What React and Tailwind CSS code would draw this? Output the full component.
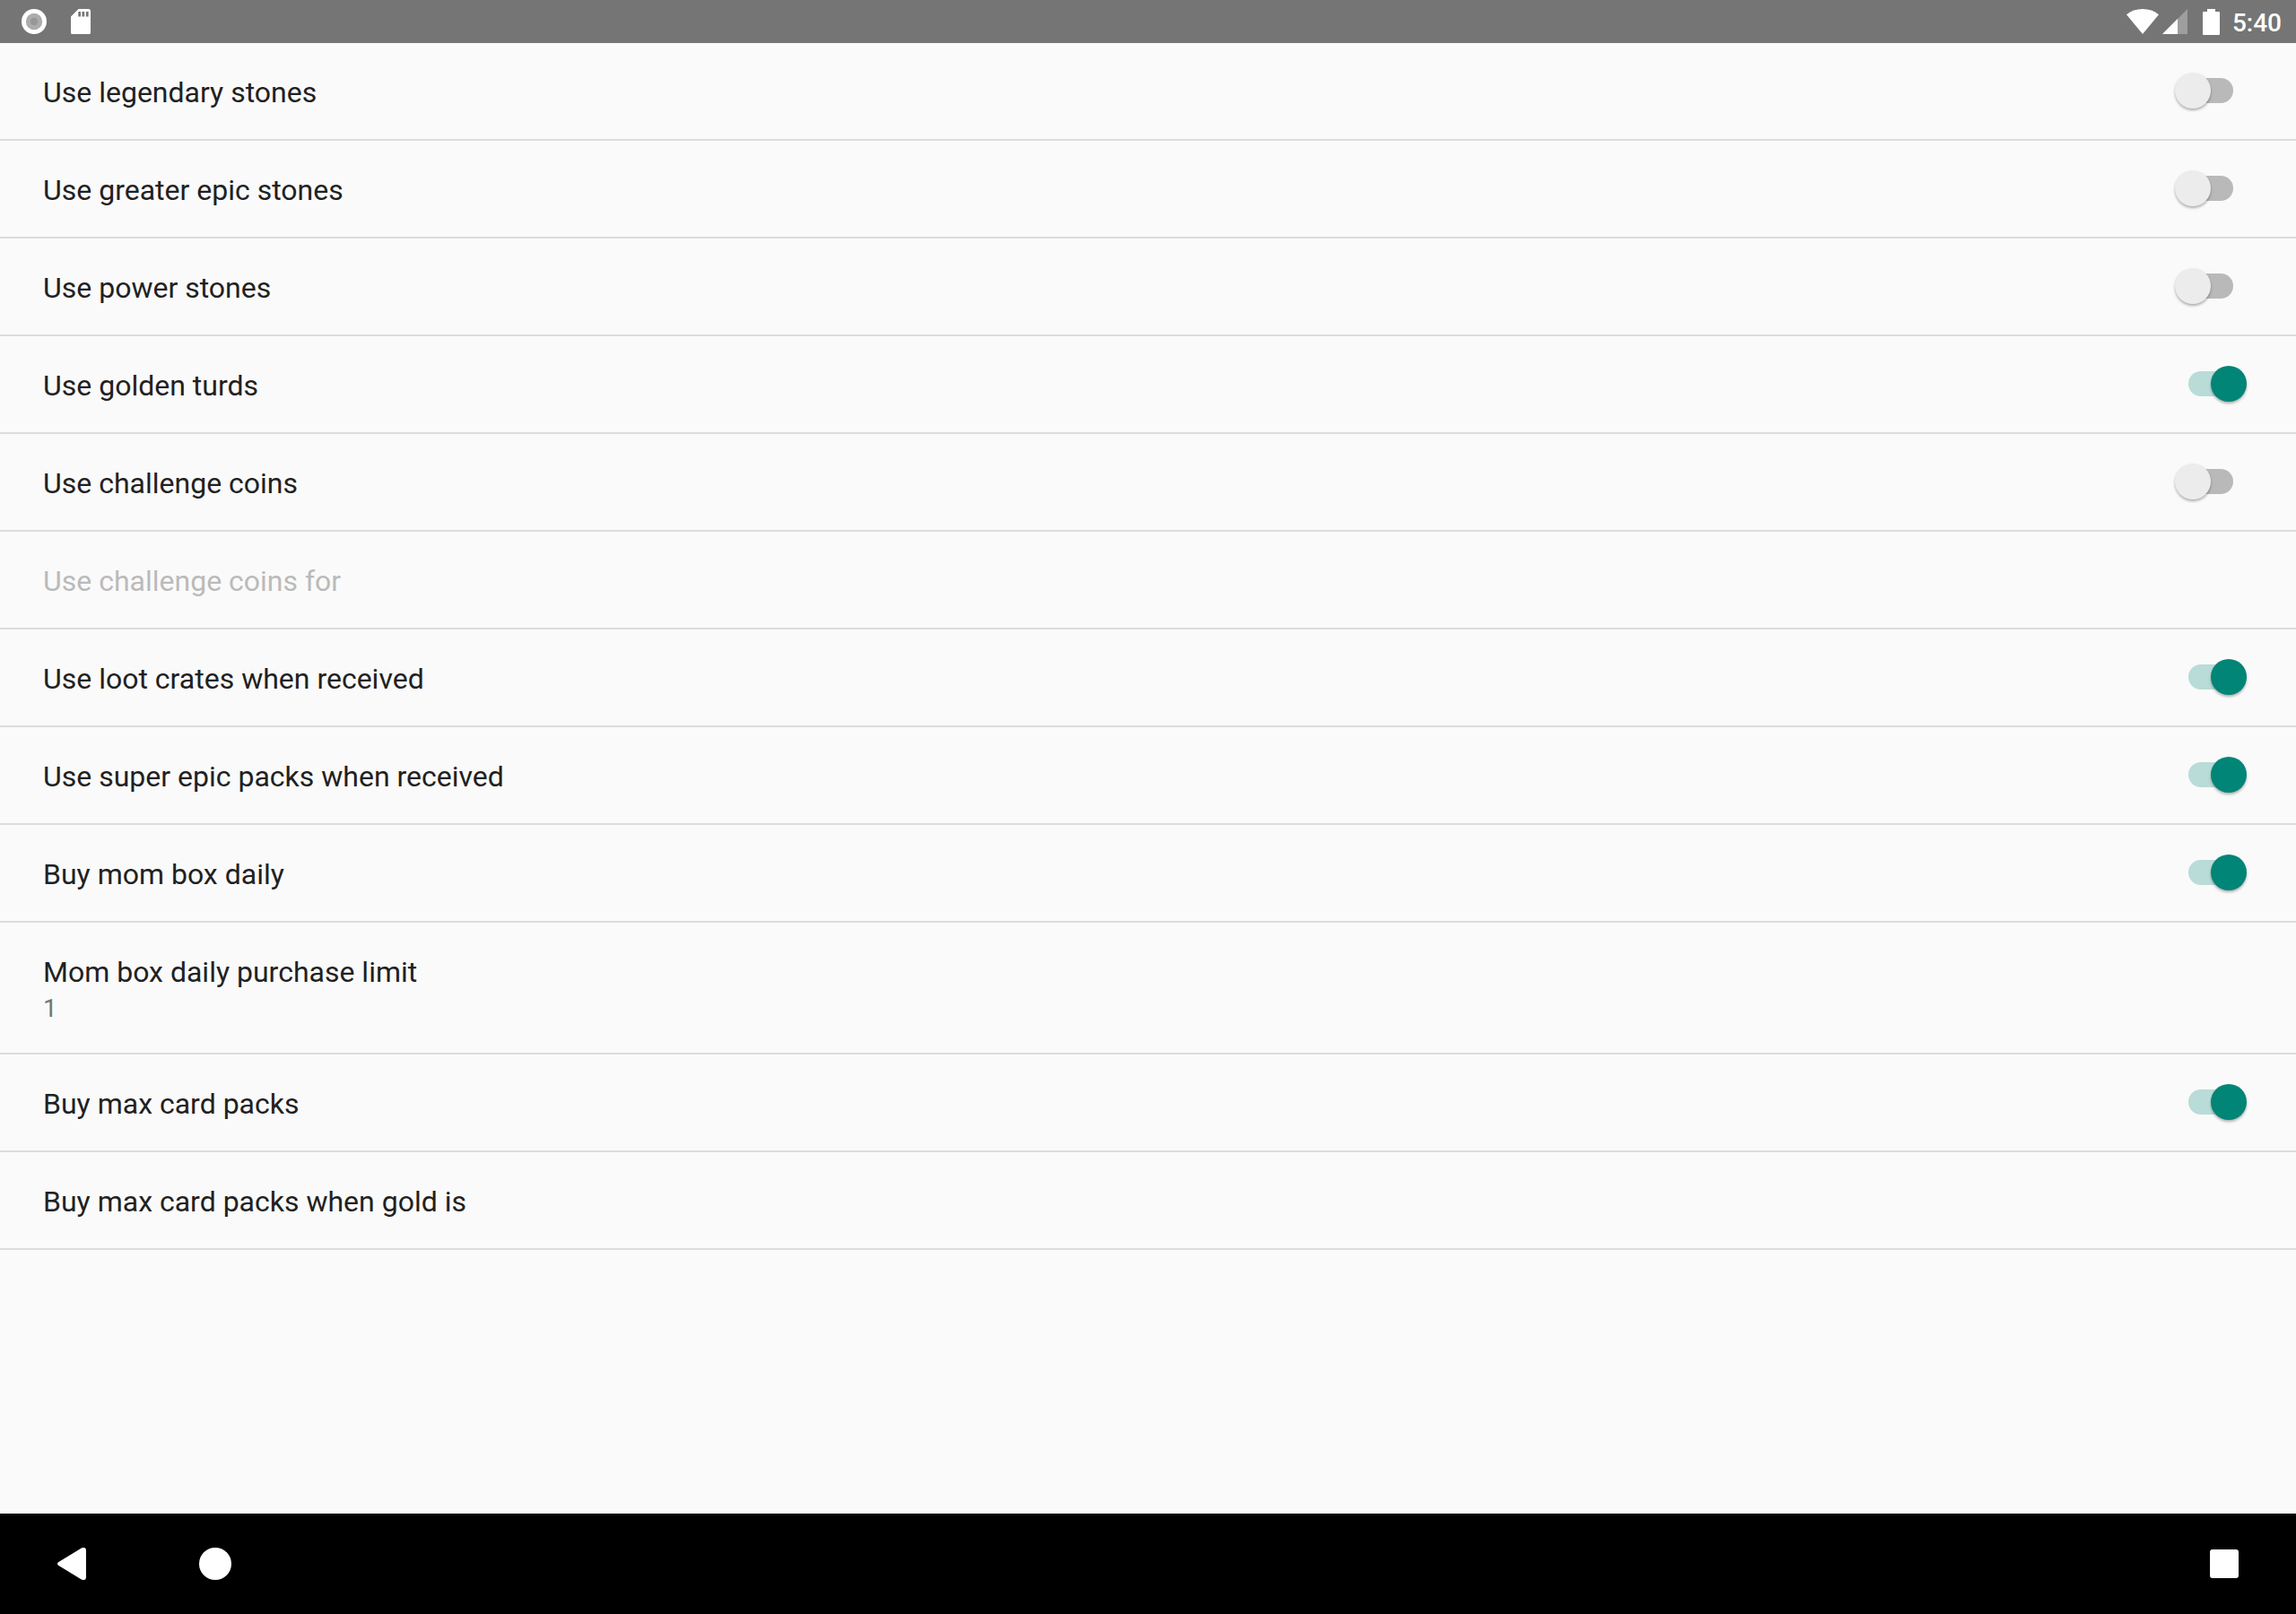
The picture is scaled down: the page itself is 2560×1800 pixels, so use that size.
import { useState } from 'react'

const PREFERENCES = [
  { key: 'legendaryStones', title: 'Use legendary stones', type: 'switch', value: false },
  { key: 'greaterEpicStones', title: 'Use greater epic stones', type: 'switch', value: false },
  { key: 'powerStones', title: 'Use power stones', type: 'switch', value: false },
  { key: 'goldenTurds', title: 'Use golden turds', type: 'switch', value: true },
  { key: 'challengeCoins', title: 'Use challenge coins', type: 'switch', value: false },
  { key: 'challengeCoinsFor', title: 'Use challenge coins for', type: 'list', dependsOn: 'challengeCoins' },
  { key: 'lootCrates', title: 'Use loot crates when received', type: 'switch', value: true },
  { key: 'superEpicPacks', title: 'Use super epic packs when received', type: 'switch', value: true },
  { key: 'momBox', title: 'Buy mom box daily', type: 'switch', value: true },
  { key: 'momBoxLimit', title: 'Mom box daily purchase limit', type: 'list', summary: '1', dependsOn: 'momBox' },
  { key: 'cardPacks', title: 'Buy max card packs', type: 'switch', value: true },
  { key: 'cardPacksWhen', title: 'Buy max card packs when gold is', type: 'list', dependsOn: 'cardPacks' },
]

const ROW = 'flex w-full items-center justify-between pl-12 pr-[55px] text-left'

function StatusBar() {
  return (
    <header className="flex h-12 shrink-0 items-center justify-between bg-[#757575] pl-6 pr-4 text-white">
      <div className="flex items-center gap-[27px]">
        <svg width="28" height="28" viewBox="0 0 28 28">
          <circle cx="14" cy="14" r="14" fill="#fff" />
          <circle cx="14" cy="14" r="9.2" fill="#acacac" />
          <circle cx="14" cy="14" r="4.2" fill="#979797" />
        </svg>
        <svg width="22" height="28" viewBox="0 0 22 28">
          <path fill="#fff" fillRule="evenodd" d="M8.5 0H19.500a2.500 2.500 0 0 1 2.500 2.500V26a2.500 2.500 0 0 1-2.500 2.500H2.500A2.500 2.500 0 0 1 0 26V8.500ZM8.300 3v5.500h2.700V3ZM12.500 3v5.500h2.700V3ZM16.900 3v5.500h2.700V3Z" />
        </svg>
      </div>
      <div className="flex items-center">
        <svg width="36" height="28" viewBox="0 0 36 28">
          <path fill="#fff" d="M18 28 0 6.200C5 2.200 11.200 0 18 0s13 2.200 18 6.200Z" />
        </svg>
        <svg className="ml-1" width="28" height="28" viewBox="0 0 28 28">
          <path fill="#fff" fillOpacity="0.3" d="M0 28 28 0v28Z" />
          <path fill="#fff" d="M0 28 17 11v17Z" />
        </svg>
        <svg className="ml-[17px]" width="19" height="29" viewBox="0 0 19 29">
          <path fill="#fff" d="M5 0h9v3h4a1 1 0 0 1 1 1v24a1 1 0 0 1-1 1H1a1 1 0 0 1-1-1V4a1 1 0 0 1 1-1h4Z" />
        </svg>
        <span className="ml-3.5 mt-1 text-[28px] leading-8 font-medium">5:40</span>
      </div>
    </header>
  )
}

function Switch({ checked, onChange }) {
  return (
    <input
      type="checkbox"
      role="switch"
      checked={checked}
      onChange={onChange}
      className="mb-0.5 grid h-10 w-20 shrink-0 appearance-none grid-cols-1 items-center outline-none before:col-start-1 before:row-start-1 before:h-7 before:w-[50px] before:justify-self-center before:rounded-full before:bg-[#b9b9b9] before:content-[''] after:z-10 after:col-start-1 after:row-start-1 after:size-10 after:justify-self-start after:rounded-full after:bg-[#ececec] after:shadow-[0_2px_3px_rgba(0,0,0,0.3)] after:content-[''] checked:before:bg-[#b9dcd8] checked:after:justify-self-end checked:after:bg-[#008577]"
    />
  )
}

function PreferenceText({ title, summary, disabled }) {
  return (
    <span className="flex flex-col pt-[34px] pb-[30px]">
      <span className={`text-[32px] leading-[43px] ${disabled ? 'text-[#bababa]' : 'text-[#212121]'}`}>{title}</span>
      {summary && <span className="text-[28px] leading-[38px] text-[#757575]">{summary}</span>}
    </span>
  )
}

function NavBar() {
  return (
    <nav className="flex h-28 shrink-0 bg-black">
      <button aria-label="Back" className="flex w-40 items-center justify-center">
        <svg width="32" height="36" viewBox="0 0 32 36">
          <path fill="#fff" d="M1 16.300 26.800.500C29.500-.800 32 .200 32 3v30c0 2.800-2.500 3.800-5.200 2.500L1 19.700c-1.300-.9-1.300-2.500 0-3.400Z" />
        </svg>
      </button>
      <button aria-label="Home" className="flex w-40 items-center justify-center">
        <span className="size-9 rounded-full bg-white" />
      </button>
      <button aria-label="Recent apps" className="ml-auto flex w-40 items-center justify-center">
        <span className="size-8 rounded-[3px] bg-white" />
      </button>
    </nav>
  )
}

export default function App() {
  const [values, setValues] = useState(() =>
    Object.fromEntries(PREFERENCES.filter(p => p.type === 'switch').map(p => [p.key, p.value]))
  )

  const toggle = (key) => setValues(prev => ({ ...prev, [key]: !prev[key] }))

  return (
    <div className="flex min-h-screen flex-col bg-[#fafafa] font-['Roboto',sans-serif]">
      <StatusBar />

      <main className="flex-1">
        <ul>
          {PREFERENCES.map(pref => {
            const disabled = pref.dependsOn ? !values[pref.dependsOn] : false

            return (
              <li key={pref.key} className="border-b-2 border-[#dcdcdc]">
                {pref.type === 'switch' ? (
                  <label className={ROW}>
                    <PreferenceText title={pref.title} />
                    <Switch checked={values[pref.key]} onChange={() => toggle(pref.key)} />
                  </label>
                ) : (
                  <button className={ROW} disabled={disabled}>
                    <PreferenceText title={pref.title} summary={pref.summary} disabled={disabled} />
                  </button>
                )}
              </li>
            )
          })}
        </ul>
      </main>

      <NavBar />
    </div>
  )
}
